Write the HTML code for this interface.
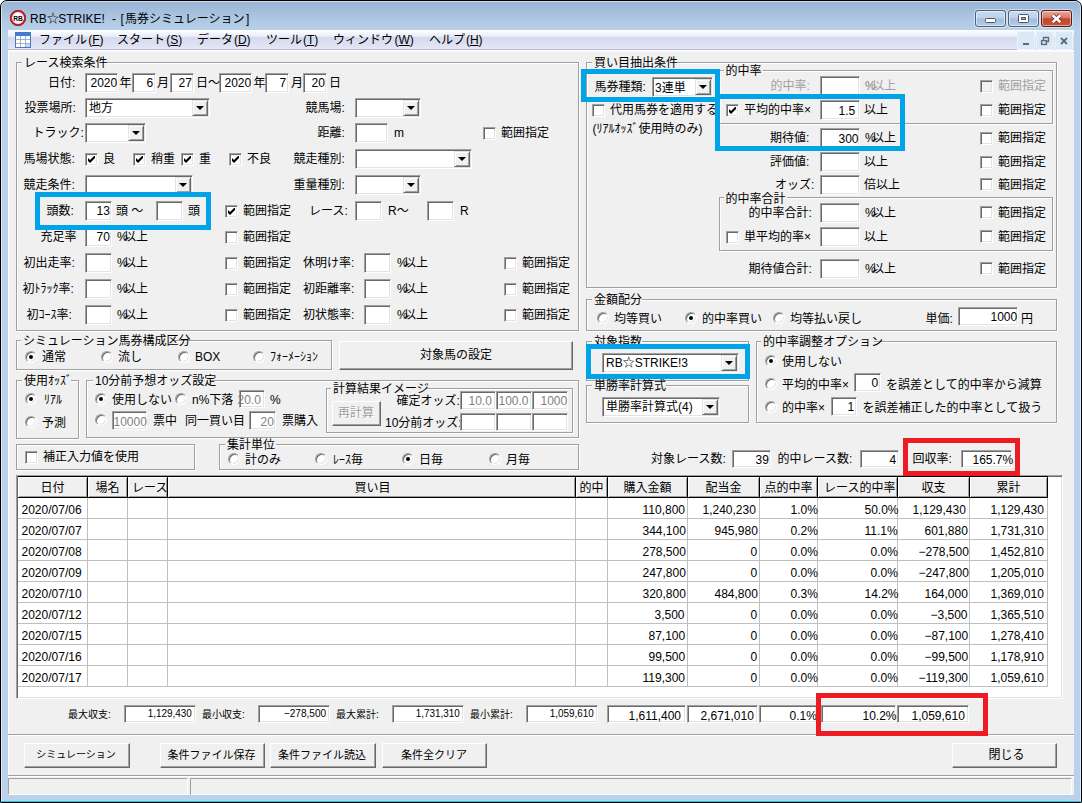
<!DOCTYPE html>
<html lang="ja"><head><meta charset="utf-8"><title>RB☆STRIKE! - [馬券シミュレーション]</title>
<style>
*{margin:0;padding:0;box-sizing:content-box}
html,body{width:1082px;height:803px;overflow:hidden}
body{position:relative;background:#fff;font-family:"Liberation Sans","Noto Sans CJK JP",sans-serif;font-size:12px;line-height:12px;color:#000}
#win{position:absolute;left:0;top:0;width:1080px;height:801px;border:1px solid #000;border-radius:7px 7px 1px 1px;overflow:hidden;
 background:linear-gradient(#98b4d6 0,#a6c0de 12px,#b2cbe6 22px,#b9d1ea 30px,#b9d1ea 100%)}
#win:before{content:"";position:absolute;left:0;top:0;right:0;bottom:0;border:1px solid rgba(255,255,255,.55);border-radius:6px 6px 0 0;border-bottom:1px solid #20c8e4}
#cap{position:absolute;left:30px;top:12px;width:230px;height:14px;font-size:12px;line-height:14px;white-space:nowrap;color:#000}
#cap span{position:absolute;top:0;white-space:nowrap}
.x{color:#000}
#menu{position:absolute;left:8px;top:30px;width:1066px;height:19px;border-bottom:1px solid #b6bccf;box-shadow:0 1px 0 #fff,0 2px 0 #f9f9f9;z-index:2;
 background:linear-gradient(#fff 0,#f4f6fb 3px,#e7ebf6 7px,#d3d8ed 7px,#e3e7f6 19px)}
#menu span{position:absolute;top:3px;font-size:12px;line-height:14px;white-space:nowrap}
#cl{position:absolute;left:8px;top:50px;width:1065px;height:745px;background:#f0f0f0;border-left:1px solid #fff}
#A{position:absolute;left:0;top:0;width:1082px;height:803px}
.t{position:absolute;white-space:nowrap;font-size:12px;line-height:12px;height:12px;color:#000}
.sn{color:#000}
.j{text-align:justify;text-align-last:justify}
.dis{color:#a0a0a0}
.n.dis{color:#8c8c8c}
.bdis{color:#a0a0a0;text-shadow:1px 1px 0 #fff}
.gp{position:absolute;height:2px;background:#f0f0f0}
.sm{font-size:10px;-webkit-text-stroke:.35px #000;line-height:10px;height:10px}
.sn{font-size:10.5px}
.gb{position:absolute;border:1px solid #a0a0a0;box-shadow:1px 1px 0 #fff,inset 1px 1px 0 #fff}
.in{position:absolute;box-sizing:border-box;background:#fff;border:1px solid;border-color:#a0a0a0 #fff #fff #a0a0a0;box-shadow:inset 1px 1px 0 #696969,inset -1px -1px 0 #e3e3e3}
.dd{position:absolute;right:1px;top:1px;bottom:1px;width:14px;background:#f0f0f0;border:1px solid;border-color:#e3e3e3 #696969 #696969 #e3e3e3;box-shadow:inset 1px 1px 0 #fff,inset -1px -1px 0 #a0a0a0}
.dd b{position:absolute;left:50%;top:50%;margin:-2px 0 0 -4px;border:4px solid transparent;border-top:4px solid #000;border-bottom:0;width:0;height:0}
.ck{position:absolute;box-sizing:border-box;width:13px;height:13px;background:#fff;border:1px solid;border-color:#a0a0a0 #fff #fff #a0a0a0;box-shadow:inset 1px 1px 0 #696969,inset -1px -1px 0 #e3e3e3}
.ck svg{position:absolute;left:2px;top:2px}
.dck{background:#f0f0f0}
.rd{position:absolute;box-sizing:border-box;width:12px;height:12px;background:#fff;border-radius:50%;border:1px solid;border-color:#a0a0a0 #fff #fff #a0a0a0;box-shadow:inset 1px 1px 0 #696969,inset -1px -1px 0 #e3e3e3}
.rd i{position:absolute;left:3px;top:3px;width:4px;height:4px;border-radius:50%;background:#000}
.bt{position:absolute;background:#f0f0f0;border:1px solid;border-color:#fff #696969 #696969 #fff;box-shadow:inset -1px -1px 0 #a0a0a0,inset 1px 1px 0 #f0f0f0}
.hl{position:absolute;z-index:5}
.tb{position:absolute;box-sizing:border-box;background:#fff;border:1px solid;border-color:#a0a0a0 #fff #fff #a0a0a0;box-shadow:inset 1px 1px 0 #696969,inset -1px -1px 0 #e3e3e3}
.th{position:absolute;background:#000}
.hc{position:absolute;background:#f0f0f0;box-shadow:inset 1px 1px 0 #fff,inset -1px -1px 0 #a0a0a0}
.vl{position:absolute;width:1px;background:#c0c0c0}
.hlne{position:absolute;height:1px;background:#c0c0c0}
.etch{position:absolute;height:1px;background:#a0a0a0;box-shadow:0 1px 0 #fff}
.cb{position:absolute;border:1px solid #4f6078;border-radius:3px;box-shadow:0 0 0 1px rgba(255,255,255,.45),inset 0 0 0 1px rgba(255,255,255,.5);background:linear-gradient(#c9dbef 0,#bcd1ea 48%,#a3bddb 52%,#b4cbe6 100%)}
.cb svg,.mb svg{position:absolute;left:0;top:0}
.cx{border-color:#5a1a14;background:linear-gradient(#e9a999 0,#d9796a 45%,#c5432c 52%,#c8553a 100%)}
.mb{position:absolute;z-index:3;width:16px;height:17px;background:#dbe8f6;border:1px solid #eaf2fb;box-shadow:0 0 0 0 #fff}
.sp{position:absolute;border:1px solid;border-color:#a0a0a0 #fff #fff #a0a0a0}
</style></head>
<body>
<div id="win"></div>
<div id="capico" style="position:absolute;left:10px;top:10px;width:16px;height:16px"><svg width="16" height="16" viewBox="0 0 16 16"><circle cx="8" cy="8" r="6.9" fill="#fff" stroke="#e8141c" stroke-width="1.8"/><circle cx="8" cy="8" r="7.8" fill="none" stroke="#5a0a0c" stroke-width=".6"/><text x="8" y="10.6" font-size="7.4" font-weight="bold" text-anchor="middle" textLength="9.6" lengthAdjust="spacingAndGlyphs" font-family="Liberation Sans,sans-serif" fill="#000">RB</text></svg></div>
<div id="cap"><span style="left:0">RB</span><span class="x" style="left:17px">☆</span><span style="left:28.2px">STRIKE!</span><span style="left:82px">-</span><span style="left:90.5px">[</span><span class="x" style="left:95px">馬券シミュレーション</span><span style="left:216px">]</span></div>
<div id="menu">
<svg style="position:absolute;left:7px;top:2px" width="16" height="16" viewBox="0 0 16 16"><rect x=".5" y=".5" width="15" height="15" fill="#fff" stroke="#4a78b8"/><rect x="1" y="1" width="14" height="3" fill="#3f7fd6"/><path d="M1 7.5h14M1 11.5h14M5.5 4v11M10.5 4v11" stroke="#9db4d4" fill="none"/><rect x="11" y="12" width="4" height="3" fill="#bcd9f5"/></svg>
<span class="x" style="left:31px">ファイル</span><span style="left:80.2px">(<u>F</u>)</span><span class="x" style="left:109px">スタート</span><span style="left:158.2px">(<u>S</u>)</span><span class="x" style="left:189px">データ</span><span style="left:225.9px">(<u>D</u>)</span><span class="x" style="left:258px">ツール</span><span style="left:294.9px">(<u>T</u>)</span><span class="x" style="left:325px">ウィンドウ</span><span style="left:386.5px">(<u>W</u>)</span><span class="x" style="left:421px">ヘルプ</span><span style="left:457.9px">(<u>H</u>)</span>
</div>
<div class="cb" style="left:975px;top:10px;width:29px;height:15px"><svg width="28" height="15" viewBox="0 0 28 15"><rect x="9.5" y="7.5" width="10" height="4" rx="1" fill="#fff" stroke="#4a5666"/></svg></div>
<div class="cb" style="left:1008px;top:10px;width:29px;height:15px"><svg width="28" height="15" viewBox="0 0 28 15"><rect x="9.5" y="3.5" width="10" height="8" rx="1" fill="#fff" stroke="#4a5666"/><rect x="12.5" y="6.5" width="4" height="2" fill="#9db6d4" stroke="#4a5666"/></svg></div>
<div class="cb cx" style="left:1041px;top:10px;width:29px;height:15px"><svg width="29" height="15" viewBox="0 0 29 15"><path d="M10.6 4.2l7.8 7M18.4 4.2l-7.8 7" stroke="#6a2a22" stroke-width="4" fill="none"/><path d="M10.6 4.2l7.8 7M18.4 4.2l-7.8 7" stroke="#fff" stroke-width="2.5" fill="none"/></svg></div>
<div class="mb" style="left:1017px;top:31px"><svg width="16" height="17" viewBox="0 0 16 17"><rect x="5" y="11" width="6" height="2" fill="#5b6a80"/></svg></div>
<div class="mb" style="left:1036px;top:31px"><svg width="16" height="17" viewBox="0 0 16 17"><path d="M6.5 8v-2.5h5v4h-2" fill="none" stroke="#5b6a80" stroke-width="1.4"/><rect x="4.6" y="8.6" width="4.8" height="3.8" fill="none" stroke="#5b6a80" stroke-width="1.4"/></svg></div>
<div class="mb" style="left:1055px;top:31px"><svg width="16" height="17" viewBox="0 0 16 17"><path d="M5 6l6 6M11 6l-6 6" stroke="#5b6a80" stroke-width="1.8" fill="none"/></svg></div>
<div id="cl"></div>
<div id="A">
<div class="gb" style="left:16px;top:62px;width:561px;height:267px"></div>
<div class="gp" style="left:22px;top:62px;width:82px"></div>
<span class="t" style="left:24px;top:56.5px">レース検索条件</span>
<span class="t" style="left:48px;top:76.5px">日付:</span>
<div class="in" style="left:85px;top:73px;width:33px;height:20px"></div>
<span class="t" style="left:90.5px;top:76.5px">2020</span>
<div class="in" style="left:132px;top:73px;width:24px;height:20px"></div>
<span class="t" style="left:146.5px;top:76.5px">6</span>
<div class="in" style="left:170px;top:73px;width:24px;height:20px"></div>
<span class="t" style="left:178.5px;top:76.5px">27</span>
<div class="in" style="left:219px;top:73px;width:33px;height:20px"></div>
<span class="t" style="left:224.5px;top:76.5px">2020</span>
<div class="in" style="left:265px;top:73px;width:24px;height:20px"></div>
<span class="t" style="left:279.5px;top:76.5px">7</span>
<div class="in" style="left:303px;top:73px;width:24px;height:20px"></div>
<span class="t" style="left:311.5px;top:76.5px">20</span>
<span class="t" style="left:119.5px;top:76.5px">年</span>
<span class="t" style="left:157px;top:76.5px">月</span>
<span class="t" style="left:196px;top:76.5px">日～</span>
<span class="t" style="left:253.5px;top:76.5px">年</span>
<span class="t" style="left:291px;top:76.5px">月</span>
<span class="t" style="left:329px;top:76.5px">日</span>
<span class="t" style="left:24.5px;top:101.5px">投票場所:</span>
<div class="in" style="left:85px;top:98px;width:125px;height:20px"><i class="dd"><b></b></i></div>
<span class="t" style="left:89px;top:102px">地方</span>
<span class="t" style="left:305.5px;top:101.5px">競馬場:</span>
<div class="in" style="left:355px;top:98px;width:66px;height:20px"><i class="dd"><b></b></i></div>
<span class="t" style="left:32.5px;top:126.5px">トラック:</span>
<div class="in" style="left:85px;top:123px;width:61px;height:20px"><i class="dd"><b></b></i></div>
<span class="t" style="left:317.5px;top:126.5px">距離:</span>
<div class="in" style="left:355px;top:123px;width:33px;height:20px"></div>
<span class="t" style="left:394px;top:126.5px">m</span>
<div class="ck" style="left:483px;top:127px"></div>
<span class="t" style="left:501px;top:126.5px">範囲指定</span>
<span class="t" style="left:23.5px;top:153px">馬場状態:</span>
<div class="ck" style="left:85px;top:153px"><svg viewBox="0 0 7 7" width="7" height="7"><path d="M0 2v3l2 2 5-5v-3l-5 5z" fill="#000"/></svg></div>
<span class="t" style="left:103px;top:153px">良</span>
<div class="ck" style="left:133px;top:153px"><svg viewBox="0 0 7 7" width="7" height="7"><path d="M0 2v3l2 2 5-5v-3l-5 5z" fill="#000"/></svg></div>
<span class="t" style="left:151px;top:153px">稍重</span>
<div class="ck" style="left:181px;top:153px"><svg viewBox="0 0 7 7" width="7" height="7"><path d="M0 2v3l2 2 5-5v-3l-5 5z" fill="#000"/></svg></div>
<span class="t" style="left:199px;top:153px">重</span>
<div class="ck" style="left:229px;top:153px"><svg viewBox="0 0 7 7" width="7" height="7"><path d="M0 2v3l2 2 5-5v-3l-5 5z" fill="#000"/></svg></div>
<span class="t" style="left:247px;top:153px">不良</span>
<span class="t" style="left:293.5px;top:153px">競走種別:</span>
<div class="in" style="left:355px;top:149px;width:117px;height:20px"><i class="dd"><b></b></i></div>
<span class="t" style="left:23.5px;top:178.5px">競走条件:</span>
<div class="in" style="left:85px;top:175px;width:108px;height:20px"><i class="dd"><b></b></i></div>
<span class="t" style="left:293.5px;top:178.5px">重量種別:</span>
<div class="in" style="left:355px;top:175px;width:66px;height:20px"><i class="dd"><b></b></i></div>
<span class="t" style="left:46.5px;top:204.5px">頭数:</span>
<div class="in" style="left:85px;top:201px;width:27px;height:20px"></div>
<span class="t" style="left:96.5px;top:204.5px">13</span>
<span class="t" style="left:116px;top:204.5px">頭 ～</span>
<div class="in" style="left:156px;top:201px;width:27px;height:20px"></div>
<span class="t" style="left:188px;top:204.5px">頭</span>
<div class="ck" style="left:225px;top:205px"><svg viewBox="0 0 7 7" width="7" height="7"><path d="M0 2v3l2 2 5-5v-3l-5 5z" fill="#000"/></svg></div>
<span class="t" style="left:243px;top:204.5px">範囲指定</span>
<span class="t" style="left:309px;top:204.5px">レース:</span>
<div class="in" style="left:355px;top:201px;width:27px;height:20px"></div>
<span class="t" style="left:388px;top:204.5px">R～</span>
<div class="in" style="left:427px;top:201px;width:27px;height:20px"></div>
<span class="t" style="left:460px;top:204.5px">R</span>
<span class="t" style="left:40.5px;top:230.5px">充足率</span>
<div class="in" style="left:85px;top:227px;width:27px;height:20px"></div>
<span class="t" style="left:96.5px;top:230.5px">70</span>
<span class="t" style="left:117px;top:230.5px">%</span>
<span class="t" style="left:124px;top:230.5px">以上</span>
<div class="ck" style="left:225px;top:231px"></div>
<span class="t" style="left:243px;top:230.5px">範囲指定</span>
<span class="t" style="left:23.5px;top:256.5px">初出走率:</span>
<div class="in" style="left:85px;top:253px;width:27px;height:20px"></div>
<span class="t" style="left:117px;top:256.5px">%</span>
<span class="t" style="left:124px;top:256.5px">以上</span>
<div class="ck" style="left:225px;top:257px"></div>
<span class="t" style="left:243px;top:256.5px">範囲指定</span>
<span class="t" style="left:303px;top:256.5px">休明け率:</span>
<div class="in" style="left:364px;top:253px;width:27px;height:20px"></div>
<span class="t" style="left:397px;top:256.5px">%</span>
<span class="t" style="left:404px;top:256.5px">以上</span>
<div class="ck" style="left:504px;top:257px"></div>
<span class="t" style="left:522px;top:256.5px">範囲指定</span>
<span class="t" style="left:22.5px;top:282.5px">初ﾄﾗｯｸ率:</span>
<div class="in" style="left:85px;top:279px;width:27px;height:20px"></div>
<span class="t" style="left:117px;top:282.5px">%</span>
<span class="t" style="left:124px;top:282.5px">以上</span>
<div class="ck" style="left:225px;top:283px"></div>
<span class="t" style="left:243px;top:282.5px">範囲指定</span>
<span class="t" style="left:303px;top:282.5px">初距離率:</span>
<div class="in" style="left:364px;top:279px;width:27px;height:20px"></div>
<span class="t" style="left:397px;top:282.5px">%</span>
<span class="t" style="left:404px;top:282.5px">以上</span>
<div class="ck" style="left:504px;top:283px"></div>
<span class="t" style="left:522px;top:282.5px">範囲指定</span>
<span class="t" style="left:26.5px;top:308.5px">初ｺｰｽ率:</span>
<div class="in" style="left:85px;top:305px;width:27px;height:20px"></div>
<span class="t" style="left:117px;top:308.5px">%</span>
<span class="t" style="left:124px;top:308.5px">以上</span>
<div class="ck" style="left:225px;top:309px"></div>
<span class="t" style="left:243px;top:308.5px">範囲指定</span>
<span class="t" style="left:303px;top:308.5px">初状態率:</span>
<div class="in" style="left:364px;top:305px;width:27px;height:20px"></div>
<span class="t" style="left:397px;top:308.5px">%</span>
<span class="t" style="left:404px;top:308.5px">以上</span>
<div class="ck" style="left:504px;top:309px"></div>
<span class="t" style="left:522px;top:308.5px">範囲指定</span>
<div class="hl" style="left:35px;top:192px;width:166px;height:28px;border:5px solid #00a2e8"></div>
<div class="gb" style="left:16px;top:340px;width:314px;height:28px"></div>
<div class="gp" style="left:21px;top:340px;width:153.5px"></div>
<span class="t" style="left:23px;top:334.5px">シミュレーション馬券構成区分</span>
<div class="rd" style="left:25px;top:351px"><i></i></div>
<span class="t" style="left:42px;top:351px">通常</span>
<div class="rd" style="left:101px;top:351px"></div>
<span class="t" style="left:118px;top:351px">流し</span>
<div class="rd" style="left:178px;top:351px"></div>
<span class="t" style="left:195px;top:351px">BOX</span>
<div class="rd" style="left:253px;top:351px"></div>
<span class="t" style="left:270px;top:351px">ﾌｫｰﾒｰｼｮﾝ</span>
<div class="bt" style="left:339px;top:341px;width:232px;height:27px"></div>
<span class="t" style="left:420px;top:349px">対象馬の設定</span>
<div class="gb" style="left:16px;top:380px;width:61px;height:57px"></div>
<div class="gp" style="left:22px;top:380px;width:49px"></div>
<span class="t" style="left:24px;top:374.5px">使用ｵｯｽﾞ</span>
<div class="rd" style="left:25px;top:393px"><i></i></div>
<span class="t" style="left:44px;top:394px">ﾘｱﾙ</span>
<div class="rd" style="left:25px;top:416px"></div>
<span class="t" style="left:42px;top:417px">予測</span>
<div class="gb" style="left:86px;top:380px;width:491px;height:56px"></div>
<div class="gp" style="left:93px;top:380px;width:117px"></div>
<span class="t" style="left:95px;top:374.5px">10分前予想オッズ設定</span>
<div class="rd" style="left:95px;top:393px"><i></i></div>
<span class="t" style="left:112px;top:394px">使用しない</span>
<div class="rd" style="left:175px;top:393px"></div>
<span class="t" style="left:192px;top:394px">n%下落</span>
<div class="in" style="left:239px;top:390px;width:26px;height:18px"></div>
<span class="t" style="left:237.5px;top:393.5px;color:#808080">20.0</span>
<span class="t" style="left:270px;top:394px">%</span>
<div class="rd" style="left:95px;top:414px"></div>
<div class="in" style="left:112px;top:411px;width:35px;height:19px"></div>
<span class="t" style="left:113.5px;top:415.5px;color:#808080">10000</span>
<span class="t" style="left:153px;top:415px">票中</span>
<span class="t" style="left:185px;top:415px">同一買い目</span>
<div class="in" style="left:249px;top:411px;width:27px;height:19px"></div>
<span class="t" style="left:260.5px;top:415.5px;color:#808080">20</span>
<span class="t" style="left:282px;top:415px">票購入</span>
<div class="gb" style="left:326px;top:388px;width:245px;height:43px"></div>
<div class="gp" style="left:331px;top:388px;width:94.5px"></div>
<span class="t" style="left:333px;top:382.5px">計算結果イメージ</span>
<div class="bt" style="left:332px;top:401px;width:47px;height:23px"></div>
<span class="t bdis" style="left:338px;top:407px">再計算</span>
<span class="t" style="left:396.5px;top:395px">確定オッズ:</span>
<span class="t" style="left:385px;top:416.5px">10分前オッズ:</span>
<div class="in" style="left:460px;top:391px;width:36px;height:19px"></div>
<span class="t" style="left:468.5px;top:394.5px;color:#808080">10.0</span>
<div class="in" style="left:460px;top:413px;width:36px;height:18px"></div>
<div class="in" style="left:496px;top:391px;width:36px;height:19px"></div>
<span class="t" style="left:498.5px;top:394.5px;color:#808080">100.0</span>
<div class="in" style="left:496px;top:413px;width:36px;height:18px"></div>
<div class="in" style="left:532px;top:391px;width:36px;height:19px"></div>
<span class="t" style="left:540.5px;top:394.5px;color:#808080">1000</span>
<div class="in" style="left:532px;top:413px;width:36px;height:18px"></div>
<div class="gb" style="left:16px;top:444px;width:177px;height:24px"></div>
<div class="ck" style="left:25px;top:451px"></div>
<span class="t" style="left:43px;top:451px">補正入力値を使用</span>
<div class="gb" style="left:219px;top:444px;width:358px;height:24px"></div>
<div class="gp" style="left:225px;top:444px;width:50.5px"></div>
<span class="t" style="left:227px;top:438.5px">集計単位</span>
<div class="rd" style="left:228px;top:453px"></div>
<span class="t" style="left:245px;top:454px">計のみ</span>
<div class="rd" style="left:315px;top:453px"></div>
<span class="t" style="left:333px;top:454px">ﾚｰｽ毎</span>
<div class="rd" style="left:402px;top:453px"><i></i></div>
<span class="t" style="left:419px;top:454px">日毎</span>
<div class="rd" style="left:489px;top:453px"></div>
<span class="t" style="left:506px;top:454px">月毎</span>
<div class="gb" style="left:586px;top:62px;width:469px;height:224px"></div>
<div class="gp" style="left:592px;top:62px;width:86px"></div>
<span class="t" style="left:594px;top:56.5px">買い目抽出条件</span>
<span class="t" style="left:594.5px;top:80.5px">馬券種類:</span>
<div class="in" style="left:652px;top:77px;width:61px;height:20px"><i class="dd"><b></b></i></div>
<span class="t" style="left:655px;top:82px">3連単</span>
<div class="ck" style="left:592px;top:104px"></div>
<span class="t" style="left:610px;top:104px">代用馬券を適用する</span>
<span class="t" style="left:592.5px;top:123px">(ﾘｱﾙｵｯｽﾞ使用時のみ)</span>
<div class="gb" style="left:719px;top:70px;width:332px;height:52px"></div>
<div class="gp" style="left:723.5px;top:70px;width:39px"></div>
<span class="t" style="left:725.5px;top:64.5px">的中率</span>
<span class="t dis" style="left:770.5px;top:79.5px">的中率:</span>
<div class="in" style="left:820px;top:76px;width:40px;height:20px"></div>
<span class="t" style="left:865px;top:79.5px;color:#808080">%</span>
<span class="t dis" style="left:872px;top:79.5px">以上</span>
<div class="ck dck" style="left:980px;top:80px"></div>
<span class="t dis" style="left:998px;top:79.5px">範囲指定</span>
<div class="ck" style="left:726px;top:104px"><svg viewBox="0 0 7 7" width="7" height="7"><path d="M0 2v3l2 2 5-5v-3l-5 5z" fill="#000"/></svg></div>
<span class="t" style="left:744px;top:103.5px">平均的中率×</span>
<div class="in" style="left:820px;top:100px;width:40px;height:20px"></div>
<span class="t" style="left:838.5px;top:104.5px">1.5</span>
<span class="t" style="left:864px;top:103.5px">以上</span>
<div class="ck" style="left:980px;top:104px"></div>
<span class="t" style="left:998px;top:103.5px">範囲指定</span>
<span class="t" style="left:770px;top:131.5px">期待値:</span>
<div class="in" style="left:820px;top:128px;width:40px;height:20px"></div>
<span class="t" style="left:838.5px;top:132.5px">300</span>
<span class="t" style="left:865px;top:131.5px">%</span>
<span class="t" style="left:872px;top:131.5px">以上</span>
<div class="ck" style="left:980px;top:132px"></div>
<span class="t" style="left:998px;top:131.5px">範囲指定</span>
<span class="t" style="left:770px;top:155.5px">評価値:</span>
<div class="in" style="left:820px;top:152px;width:40px;height:20px"></div>
<span class="t" style="left:864px;top:155.5px">以上</span>
<div class="ck" style="left:980px;top:156px"></div>
<span class="t" style="left:998px;top:155.5px">範囲指定</span>
<span class="t" style="left:775px;top:178.5px">オッズ:</span>
<div class="in" style="left:820px;top:175px;width:40px;height:20px"></div>
<span class="t" style="left:864px;top:178.5px">倍以上</span>
<div class="ck" style="left:980px;top:178px"></div>
<span class="t" style="left:998px;top:178.5px">範囲指定</span>
<div class="gb" style="left:719px;top:197px;width:332px;height:52px"></div>
<div class="gp" style="left:723.5px;top:197px;width:63.5px"></div>
<span class="t" style="left:725.5px;top:192.5px">的中率合計</span>
<span class="t" style="left:748.5px;top:206.5px">的中率合計:</span>
<div class="in" style="left:820px;top:203px;width:40px;height:20px"></div>
<span class="t" style="left:865px;top:206.5px">%</span>
<span class="t" style="left:872px;top:206.5px">以上</span>
<div class="ck" style="left:980px;top:206px"></div>
<span class="t" style="left:998px;top:206.5px">範囲指定</span>
<div class="ck" style="left:726px;top:231px"></div>
<span class="t" style="left:744px;top:230.5px">単平均的率×</span>
<div class="in" style="left:820px;top:227px;width:40px;height:20px"></div>
<span class="t" style="left:864px;top:230.5px">以上</span>
<div class="ck" style="left:980px;top:230px"></div>
<span class="t" style="left:998px;top:230.5px">範囲指定</span>
<span class="t" style="left:748.5px;top:262.5px">期待値合計:</span>
<div class="in" style="left:820px;top:259px;width:40px;height:20px"></div>
<span class="t" style="left:865px;top:262.5px">%</span>
<span class="t" style="left:872px;top:262.5px">以上</span>
<div class="ck" style="left:980px;top:262px"></div>
<span class="t" style="left:998px;top:262.5px">範囲指定</span>
<div class="hl" style="left:581px;top:69px;width:129px;height:23px;border:5px solid #00a2e8"></div>
<div class="hl" style="left:715px;top:94px;width:180px;height:47px;border:5px solid #00a2e8"></div>
<div class="gb" style="left:586px;top:299px;width:469px;height:30px"></div>
<div class="gp" style="left:592px;top:299px;width:50px"></div>
<span class="t" style="left:594px;top:293.5px">金額配分</span>
<div class="rd" style="left:597px;top:312px"></div>
<span class="t" style="left:614px;top:313px">均等買い</span>
<div class="rd" style="left:685px;top:312px"><i></i></div>
<span class="t" style="left:702px;top:313px">的中率買い</span>
<div class="rd" style="left:773px;top:312px"></div>
<span class="t" style="left:790px;top:313px">均等払い戻し</span>
<span class="t" style="left:925.5px;top:313px">単価:</span>
<div class="in" style="left:958px;top:307px;width:60px;height:19px"></div>
<span class="t" style="left:990.5px;top:310.5px">1000</span>
<span class="t" style="left:1021px;top:313px">円</span>
<div class="gb" style="left:586px;top:341px;width:161px;height:38px"></div>
<div class="gp" style="left:592px;top:341px;width:50px"></div>
<span class="t" style="left:594px;top:335.5px">対象指数</span>
<div class="in" style="left:602px;top:353px;width:137px;height:20px"><i class="dd"><b></b></i></div>
<span class="t" style="left:606px;top:357px">RB☆STRIKE!3</span>
<div class="hl" style="left:586px;top:344px;width:154px;height:25px;border:5px solid #00a2e8"></div>
<div class="gb" style="left:586px;top:385px;width:161px;height:36px"></div>
<div class="gp" style="left:592px;top:385px;width:74px"></div>
<span class="t" style="left:594px;top:379.5px">単勝率計算式</span>
<div class="in" style="left:602px;top:397px;width:118px;height:20px"><i class="dd"><b></b></i></div>
<span class="t" style="left:606px;top:401px">単勝率計算式(4)</span>
<div class="gb" style="left:756px;top:341px;width:299px;height:80px"></div>
<div class="gp" style="left:761px;top:341px;width:113px"></div>
<span class="t" style="left:763px;top:335.5px">的中率調整オプション</span>
<div class="rd" style="left:765px;top:355px"><i></i></div>
<span class="t" style="left:782px;top:356px">使用しない</span>
<div class="rd" style="left:765px;top:378px"></div>
<span class="t" style="left:782px;top:379px">平均的中率×</span>
<div class="in" style="left:854px;top:373px;width:27px;height:19px"></div>
<span class="t" style="left:871.5px;top:376.5px">0</span>
<span class="t" style="left:886px;top:379px">を誤差として的中率から減算</span>
<div class="rd" style="left:765px;top:401px"></div>
<span class="t" style="left:782px;top:402px">的中率×</span>
<div class="in" style="left:831px;top:397px;width:26px;height:19px"></div>
<span class="t" style="left:847.5px;top:400.5px">1</span>
<span class="t" style="left:862.5px;top:402px">を誤差補正した的中率として扱う</span>
<span class="t" style="left:651px;top:452.5px">対象レース数:</span>
<div class="in" style="left:732px;top:450px;width:39px;height:18px"></div>
<span class="t" style="left:755.5px;top:453.5px">39</span>
<span class="t" style="left:777.5px;top:452.5px">的中レース数:</span>
<div class="in" style="left:860px;top:450px;width:39px;height:18px"></div>
<span class="t" style="left:889.5px;top:453.5px">4</span>
<span class="t" style="left:912.5px;top:452.5px">回収率:</span>
<div class="in" style="left:961px;top:450px;width:51px;height:18px"></div>
<span class="t" style="left:972.5px;top:453.5px">165.7%</span>
<div class="hl" style="left:903px;top:438px;width:107px;height:28px;border:5px solid #ed1c24"></div>
<div class="tb" style="left:16px;top:475px;width:1047px;height:224px"></div>
<div class="th" style="left:18px;top:476px;width:1030px;height:22px"></div>
<div class="hc" style="left:18px;top:477px;width:69px;height:20px"></div>
<span class="t" style="left:40.5px;top:481.5px">日付</span>
<div class="vl" style="left:87px;top:498px;height:189px"></div>
<div class="hc" style="left:88px;top:477px;width:39px;height:20px"></div>
<span class="t" style="left:95.5px;top:481.5px">場名</span>
<div class="vl" style="left:127px;top:498px;height:189px"></div>
<div class="hc" style="left:128px;top:477px;width:39px;height:20px"></div>
<span class="t" style="left:132px;top:481.5px">レース</span>
<div class="vl" style="left:167px;top:498px;height:189px"></div>
<div class="hc" style="left:168px;top:477px;width:407px;height:20px"></div>
<span class="t" style="left:354.5px;top:481.5px">買い目</span>
<div class="vl" style="left:575px;top:498px;height:189px"></div>
<div class="hc" style="left:576px;top:477px;width:31px;height:20px"></div>
<span class="t" style="left:579.5px;top:481.5px">的中</span>
<div class="vl" style="left:607px;top:498px;height:189px"></div>
<div class="hc" style="left:608px;top:477px;width:79px;height:20px"></div>
<span class="t" style="left:623.5px;top:481.5px">購入金額</span>
<div class="vl" style="left:687px;top:498px;height:189px"></div>
<div class="hc" style="left:688px;top:477px;width:71px;height:20px"></div>
<span class="t" style="left:705.5px;top:481.5px">配当金</span>
<div class="vl" style="left:759px;top:498px;height:189px"></div>
<div class="hc" style="left:760px;top:477px;width:57px;height:20px"></div>
<span class="t" style="left:764.5px;top:481.5px">点的中率</span>
<div class="vl" style="left:817px;top:498px;height:189px"></div>
<div class="hc" style="left:818px;top:477px;width:79px;height:20px"></div>
<span class="t" style="left:824px;top:481.5px">レース的中率</span>
<div class="vl" style="left:897px;top:498px;height:189px"></div>
<div class="hc" style="left:898px;top:477px;width:71px;height:20px"></div>
<span class="t" style="left:921.5px;top:481.5px">収支</span>
<div class="vl" style="left:969px;top:498px;height:189px"></div>
<div class="hc" style="left:970px;top:477px;width:77px;height:20px"></div>
<span class="t" style="left:996.5px;top:481.5px">累計</span>
<div class="vl" style="left:1047px;top:498px;height:189px"></div>
<div class="hlne" style="left:18px;top:518px;width:1029px"></div>
<span class="t" style="left:21.5px;top:503.5px">2020/07/06</span>
<span class="t" style="left:642.5px;top:503.5px">110,800</span>
<span class="t" style="left:702.5px;top:503.5px">1,240,230</span>
<span class="t" style="left:790.5px;top:503.5px">1.0%</span>
<span class="t" style="left:864.5px;top:503.5px">50.0%</span>
<span class="t" style="left:912.5px;top:503.5px">1,129,430</span>
<span class="t" style="left:990.5px;top:503.5px">1,129,430</span>
<div class="hlne" style="left:18px;top:539px;width:1029px"></div>
<span class="t" style="left:21.5px;top:524.5px">2020/07/07</span>
<span class="t" style="left:642.5px;top:524.5px">344,100</span>
<span class="t" style="left:714.5px;top:524.5px">945,980</span>
<span class="t" style="left:790.5px;top:524.5px">0.2%</span>
<span class="t" style="left:864.5px;top:524.5px">11.1%</span>
<span class="t" style="left:924.5px;top:524.5px">601,880</span>
<span class="t" style="left:990.5px;top:524.5px">1,731,310</span>
<div class="hlne" style="left:18px;top:560px;width:1029px"></div>
<span class="t" style="left:21.5px;top:545.5px">2020/07/08</span>
<span class="t" style="left:642.5px;top:545.5px">278,500</span>
<span class="t" style="left:750.5px;top:545.5px">0</span>
<span class="t" style="left:790.5px;top:545.5px">0.0%</span>
<span class="t" style="left:870.5px;top:545.5px">0.0%</span>
<span class="t" style="left:918.5px;top:545.5px">−278,500</span>
<span class="t" style="left:990.5px;top:545.5px">1,452,810</span>
<div class="hlne" style="left:18px;top:581px;width:1029px"></div>
<span class="t" style="left:21.5px;top:566.5px">2020/07/09</span>
<span class="t" style="left:642.5px;top:566.5px">247,800</span>
<span class="t" style="left:750.5px;top:566.5px">0</span>
<span class="t" style="left:790.5px;top:566.5px">0.0%</span>
<span class="t" style="left:870.5px;top:566.5px">0.0%</span>
<span class="t" style="left:918.5px;top:566.5px">−247,800</span>
<span class="t" style="left:990.5px;top:566.5px">1,205,010</span>
<div class="hlne" style="left:18px;top:602px;width:1029px"></div>
<span class="t" style="left:21.5px;top:587.5px">2020/07/10</span>
<span class="t" style="left:642.5px;top:587.5px">320,800</span>
<span class="t" style="left:714.5px;top:587.5px">484,800</span>
<span class="t" style="left:790.5px;top:587.5px">0.3%</span>
<span class="t" style="left:864.5px;top:587.5px">14.2%</span>
<span class="t" style="left:924.5px;top:587.5px">164,000</span>
<span class="t" style="left:990.5px;top:587.5px">1,369,010</span>
<div class="hlne" style="left:18px;top:623px;width:1029px"></div>
<span class="t" style="left:21.5px;top:608.5px">2020/07/12</span>
<span class="t" style="left:654.5px;top:608.5px">3,500</span>
<span class="t" style="left:750.5px;top:608.5px">0</span>
<span class="t" style="left:790.5px;top:608.5px">0.0%</span>
<span class="t" style="left:870.5px;top:608.5px">0.0%</span>
<span class="t" style="left:930.5px;top:608.5px">−3,500</span>
<span class="t" style="left:990.5px;top:608.5px">1,365,510</span>
<div class="hlne" style="left:18px;top:644px;width:1029px"></div>
<span class="t" style="left:21.5px;top:629.5px">2020/07/15</span>
<span class="t" style="left:648.5px;top:629.5px">87,100</span>
<span class="t" style="left:750.5px;top:629.5px">0</span>
<span class="t" style="left:790.5px;top:629.5px">0.0%</span>
<span class="t" style="left:870.5px;top:629.5px">0.0%</span>
<span class="t" style="left:924.5px;top:629.5px">−87,100</span>
<span class="t" style="left:990.5px;top:629.5px">1,278,410</span>
<div class="hlne" style="left:18px;top:665px;width:1029px"></div>
<span class="t" style="left:21.5px;top:650.5px">2020/07/16</span>
<span class="t" style="left:648.5px;top:650.5px">99,500</span>
<span class="t" style="left:750.5px;top:650.5px">0</span>
<span class="t" style="left:790.5px;top:650.5px">0.0%</span>
<span class="t" style="left:870.5px;top:650.5px">0.0%</span>
<span class="t" style="left:924.5px;top:650.5px">−99,500</span>
<span class="t" style="left:990.5px;top:650.5px">1,178,910</span>
<div class="hlne" style="left:18px;top:686px;width:1029px"></div>
<span class="t" style="left:21.5px;top:671.5px">2020/07/17</span>
<span class="t" style="left:642.5px;top:671.5px">119,300</span>
<span class="t" style="left:750.5px;top:671.5px">0</span>
<span class="t" style="left:790.5px;top:671.5px">0.0%</span>
<span class="t" style="left:870.5px;top:671.5px">0.0%</span>
<span class="t" style="left:918.5px;top:671.5px">−119,300</span>
<span class="t" style="left:990.5px;top:671.5px">1,059,610</span>
<span class="t" style="left:68px;top:709px;font-size:10px">最大収支:</span>
<span class="t" style="left:202px;top:709px;font-size:10px">最小収支:</span>
<span class="t" style="left:336px;top:709px;font-size:10px">最大累計:</span>
<span class="t" style="left:470px;top:709px;font-size:10px">最小累計:</span>
<div class="in" style="left:124px;top:705px;width:72px;height:18px"></div>
<span class="t n sn" style="top:707px;right:890px;transform-origin:100% 50%;transform:scaleX(0.941);">1,129,430</span>
<div class="in" style="left:258px;top:705px;width:72px;height:18px"></div>
<span class="t n sn" style="top:707px;right:756px;transform-origin:100% 50%;transform:scaleX(0.959);">−278,500</span>
<div class="in" style="left:392px;top:705px;width:72px;height:18px"></div>
<span class="t n sn" style="top:707px;right:622px;transform-origin:100% 50%;transform:scaleX(0.941);">1,731,310</span>
<div class="in" style="left:526px;top:705px;width:72px;height:18px"></div>
<span class="t n sn" style="top:707px;right:488px;transform-origin:100% 50%;transform:scaleX(0.941);">1,059,610</span>
<div class="in" style="left:607px;top:705px;width:79px;height:18px"></div>
<span class="t" style="left:628.5px;top:709.5px">1,611,400</span>
<div class="in" style="left:687px;top:705px;width:71px;height:18px"></div>
<span class="t" style="left:700.5px;top:709.5px">2,671,010</span>
<div class="in" style="left:759px;top:705px;width:58px;height:18px"></div>
<span class="t" style="left:789.5px;top:709.5px">0.1%</span>
<div class="in" style="left:821px;top:705px;width:75px;height:18px"></div>
<span class="t" style="left:862.5px;top:709.5px">10.2%</span>
<div class="in" style="left:897px;top:705px;width:72px;height:18px"></div>
<span class="t" style="left:911.5px;top:709.5px">1,059,610</span>
<div class="hl" style="left:816px;top:693px;width:162px;height:33px;border:5px solid #ed1c24"></div>
<div class="etch" style="left:8px;top:734px;width:1066px"></div>
<div class="bt" style="left:24px;top:743px;width:104px;height:23px"></div>
<span class="t" style="left:36.25px;top:749px;font-size:10px">シミュレーション</span>
<div class="bt" style="left:160px;top:743px;width:103px;height:23px"></div>
<span class="t" style="left:167.5px;top:749px;font-size:11px">条件ファイル保存</span>
<div class="bt" style="left:270px;top:743px;width:104px;height:23px"></div>
<span class="t" style="left:278px;top:749px;font-size:11px">条件ファイル読込</span>
<div class="bt" style="left:382px;top:743px;width:103px;height:23px"></div>
<span class="t" style="left:401px;top:749px;font-size:11px">条件全クリア</span>
<div class="bt" style="left:952px;top:743px;width:103px;height:23px"></div>
<span class="t" style="left:988.5px;top:749px">閉じる</span>
<div class="etch" style="left:8px;top:775px;width:1066px"></div>
<div class="sp" style="left:8px;top:778px;width:178px;height:15px"></div>
<div class="sp" style="left:190px;top:778px;width:880px;height:15px"></div>
</div>
</body></html>
